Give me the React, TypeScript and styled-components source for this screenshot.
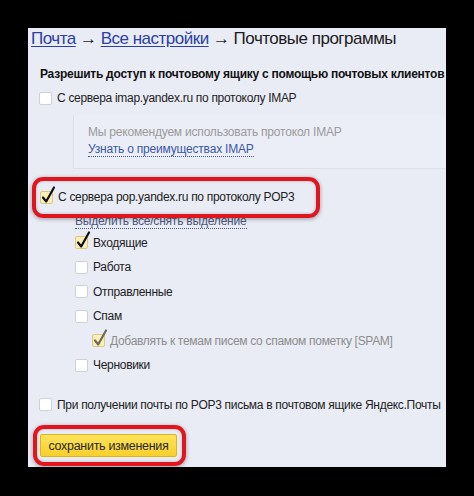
import styled, { createGlobalStyle } from "styled-components";

const GlobalStyle = createGlobalStyle`
  html, body {
    margin: 0;
    padding: 0;
    background: #000;
  }
  body {
    font-family: "Liberation Sans", Arial, sans-serif;
    color: #222;
  }
`;

const Page = styled.div`
  width: 474px;
  height: 496px;
  padding: 28px 0 0 28px;
  box-sizing: border-box;
  background: #000;
`;

const Panel = styled.div`
  width: 418px;
  height: 439px;
  background: #e9ebf5;
  overflow: hidden;
  display: flex;
  flex-direction: column;
  align-items: flex-start;
`;

const Breadcrumb = styled.div`
  font-size: 17px;
  letter-spacing: -0.5px;
  line-height: 22px;
  padding-left: 3px;
  color: #1c1c1c;
  white-space: nowrap;

  a {
    color: #2b3fa6;
    text-decoration: underline;
    text-underline-offset: 2px;
  }
`;

const Heading = styled.div`
  margin: 16px 0 0 12px;
  font-size: 12px;
  letter-spacing: -0.25px;
  line-height: 16px;
  font-weight: bold;
  color: #111;
  white-space: nowrap;
`;

const Row = styled.label<{ $indent?: number; $muted?: boolean }>`
  display: flex;
  align-items: center;
  gap: 5px;
  height: 24.5px;
  margin-left: ${(p) => p.$indent ?? 0}px;
  font-size: 12px;
  letter-spacing: -0.3px;
  color: ${(p) => (p.$muted ? "#8d8d8d" : "#222")};
  white-space: nowrap;
`;

const Box = styled.span<{ $checked?: boolean }>`
  position: relative;
  flex: none;
  width: 11px;
  height: 11px;
  border: 1px solid ${(p) => (p.$checked ? "#d9c887" : "#cfd1d8")};
  border-radius: 2px;
  background: ${(p) => (p.$checked ? "#fbefb8" : "#fff")};

  svg {
    position: absolute;
    left: 0;
    top: -6px;
  }
`;

const Check = ({ checked, muted }: { checked?: boolean; muted?: boolean }) => (
  <Box $checked={checked}>
    {checked && (
      <svg width="15" height="18" viewBox="0 0 15 18">
        <path
          d="M2 11.5 L5.2 15.5 L13 1.5"
          fill="none"
          stroke={muted ? "#6e6b57" : "#111"}
          strokeWidth="2.2"
          strokeLinecap="round"
          strokeLinejoin="round"
        />
      </svg>
    )}
  </Box>
);

const ImapRow = styled.div`
  margin: 4px 0 0 11px;
`;

const Hint = styled.div`
  align-self: stretch;
  margin: 4px 0 0 45px;
  padding: 9px 0 10px 14px;
  border-left: 1px solid #dde0ea;
  border-bottom: 1px solid #dde0ea;
  background: #eceef7;
  font-size: 12px;
  letter-spacing: -0.2px;
  line-height: 17px;
  color: #9a9a9a;
`;

const DottedLink = styled.a<{ $color?: string }>`
  color: ${(p) => p.$color ?? "#3a58a8"};
  text-decoration: none;
  border-bottom: 1px dotted currentColor;
  cursor: pointer;
`;

const Highlight = styled.div<{ $pad: string }>`
  position: relative;
  z-index: 1;
  border: 4px solid #e0161f;
  border-radius: 11px;
  padding: ${(p) => p.$pad};
  box-shadow: 0 1px 4px rgba(0, 0, 0, 0.35), inset 0 0 3px rgba(0, 0, 0, 0.25);
`;

const PopBlock = styled(Highlight)`
  margin: 8px 0 0 4px;
  width: 276px;
  height: 33px;
  display: flex;
  align-items: center;
`;

const SelectAll = styled.div`
  margin: -5px 0 0 47px;
  font-size: 12px;
  letter-spacing: -0.2px;
  line-height: 16px;
`;

const Folders = styled.div`
  margin: 2px 0 0 47px;
  display: flex;
  flex-direction: column;
`;

const KeepRow = styled.div`
  margin: 15px 0 0 11px;
`;

const SaveBlock = styled(Highlight)`
  margin: 8px 0 0 5px;
`;

const SaveButton = styled.button`
  display: block;
  width: 137px;
  height: 23px;
  padding: 0;
  border: 1px solid #dcb622;
  border-radius: 2px;
  background: linear-gradient(#fde25a, #f9d02c);
  font-family: "Liberation Sans", Arial, sans-serif;
  font-size: 12.5px;
  letter-spacing: -0.3px;
  color: #2a2a2a;
  cursor: pointer;
`;

const folders = [
  { name: "Входящие", checked: true },
  { name: "Работа" },
  { name: "Отправленные" },
  { name: "Спам" },
];

export default function App() {
  return (
    <Page>
      <GlobalStyle />
      <Panel>
        <Breadcrumb>
          <a href="#">Почта</a> → <a href="#">Все настройки</a> → Почтовые программы
        </Breadcrumb>
        <Heading>Разрешить доступ к почтовому ящику с помощью почтовых клиентов</Heading>
        <ImapRow>
          <Row>
            <Check />С сервера imap.yandex.ru по протоколу IMAP
          </Row>
        </ImapRow>
        <Hint>
          <div>Мы рекомендуем использовать протокол IMAP</div>
          <div>
            <DottedLink>Узнать о преимуществах IMAP</DottedLink>
          </div>
        </Hint>
        <PopBlock $pad="0 0 0 4px">
          <Row>
            <Check checked />С сервера pop.yandex.ru по протоколу POP3
          </Row>
        </PopBlock>
        <SelectAll>
          <DottedLink $color="#4d5a80">Выделить все/снять выделение</DottedLink>
        </SelectAll>
        <Folders>
          {folders.map((f) => (
            <Row key={f.name}>
              <Check checked={f.checked} />
              {f.name}
            </Row>
          ))}
          <Row $indent={17} $muted>
            <Check checked muted />
            Добавлять к темам писем со спамом пометку [SPAM]
          </Row>
          <Row>
            <Check />
            Черновики
          </Row>
        </Folders>
        <KeepRow>
          <Row>
            <Check />
            При получении почты по POP3 письма в почтовом ящике Яндекс.Почты
          </Row>
        </KeepRow>
        <SaveBlock $pad="5px 5px 5px 3px">
          <SaveButton>сохранить изменения</SaveButton>
        </SaveBlock>
      </Panel>
    </Page>
  );
}
